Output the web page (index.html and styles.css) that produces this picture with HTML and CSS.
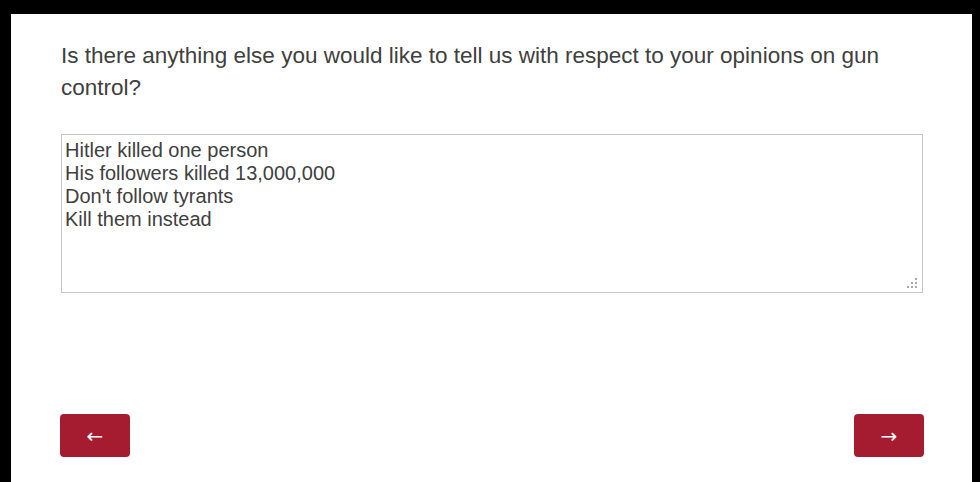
FILE: index.html
```html
<!DOCTYPE html>
<html>
<head>
<meta charset="utf-8">
<link rel="stylesheet" href="styles.css">
</head>
<body>
<div class="page">
  <p class="question">Is there anything else you would like to tell us with respect to your opinions on gun control?</p>
  <div class="field">
    <textarea class="answer">Hitler killed one person
His followers killed 13,000,000
Don't follow tyrants
Kill them instead</textarea>
    <span class="grip"><i></i><i></i><i></i><i></i><i></i><i></i></span>
  </div>
  <div class="nav">
    <button class="btn">←</button>
    <button class="btn">→</button>
  </div>
</div>
</body>
</html>
```

FILE: styles.css
```css
html, body {
  margin: 0;
  padding: 0;
  background: #000;
  height: 100%;
  overflow: hidden;
}
.page {
  box-sizing: border-box;
  background: #fff;
  margin: 14px 8px 0 11px;
  padding: 26px 48px 0 49px;
  height: calc(100vh - 14px);
  font-family: "Liberation Sans", Arial, sans-serif;
  color: #404040;
}
.question {
  margin: 0 1px;
  font-size: 22.5px;
  line-height: 32px;
}
.field {
  position: relative;
  margin: 30px 1px 0;
  height: 159px;
}
.answer {
  display: block;
  box-sizing: border-box;
  width: 100%;
  height: 159px;
  margin: 0;
  padding: 4px 3px 2px;
  border: 1px solid #c6c6c6;
  font-family: "Liberation Sans", Arial, sans-serif;
  font-size: 20px;
  line-height: 23px;
  color: #404040;
  resize: none;
  outline: none;
}
.grip {
  position: absolute;
  right: 6px;
  bottom: 5px;
  width: 10px;
  height: 10px;
  display: grid;
  grid-template-columns: repeat(3, 2px);
  grid-template-rows: repeat(3, 2px);
  gap: 2px;
}
.grip i {
  display: block;
  width: 2px;
  height: 2px;
  background: #a8a8a8;
}
.grip i:nth-child(1) { grid-column: 3; grid-row: 1; }
.grip i:nth-child(2) { grid-column: 2; grid-row: 2; }
.grip i:nth-child(3) { grid-column: 3; grid-row: 2; }
.grip i:nth-child(4) { grid-column: 1; grid-row: 3; }
.grip i:nth-child(5) { grid-column: 2; grid-row: 3; }
.grip i:nth-child(6) { grid-column: 3; grid-row: 3; }
.nav {
  display: flex;
  justify-content: space-between;
  margin-top: 121px;
}
.btn {
  width: 70px;
  height: 43px;
  border: none;
  border-radius: 4px;
  background: #a51c30;
  color: #fff;
  font-family: "DejaVu Sans", sans-serif;
  font-size: 20px;
  line-height: 1;
  padding: 0;
  cursor: pointer;
}
```
